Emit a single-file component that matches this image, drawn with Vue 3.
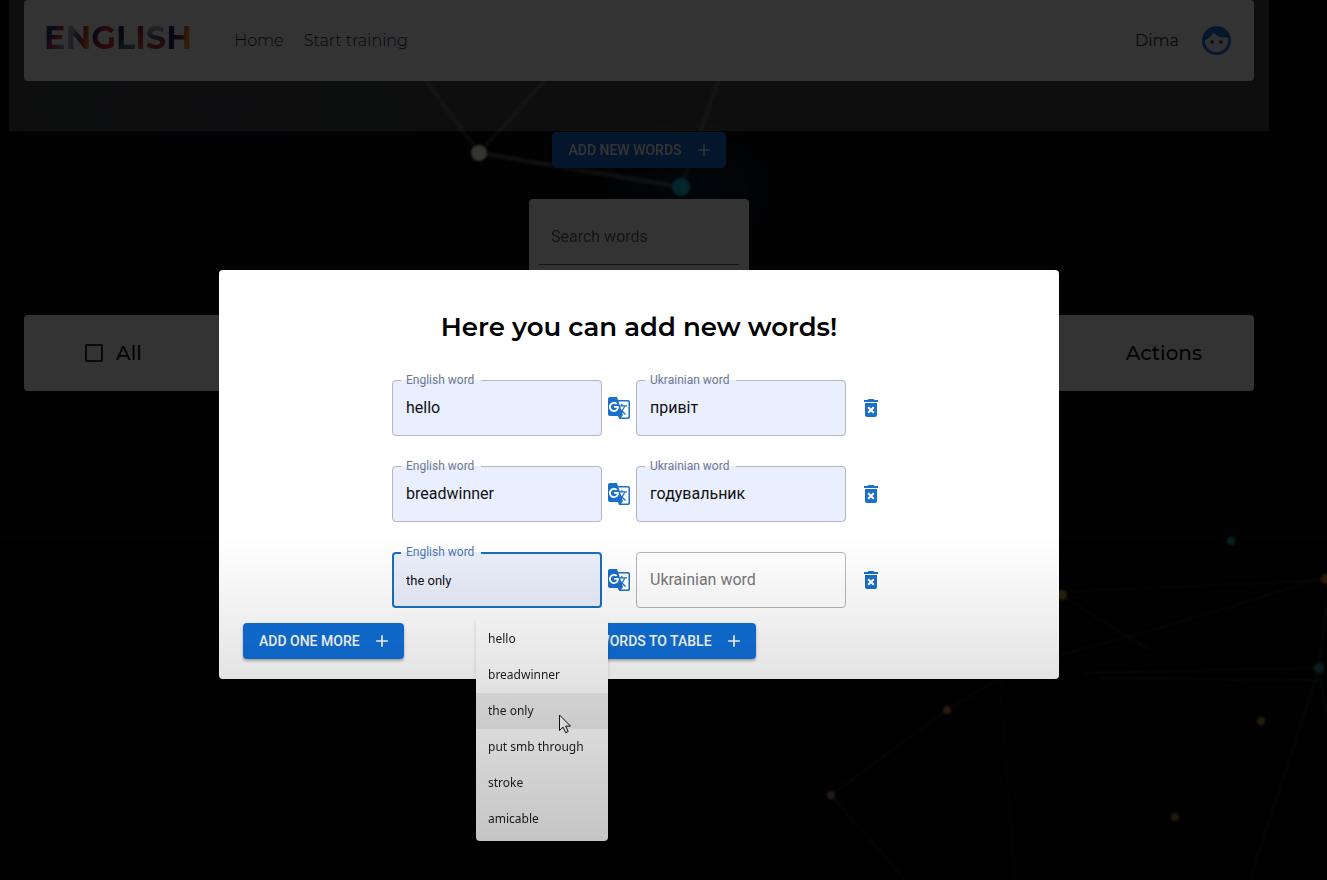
<script setup>
import { ref } from 'vue'

const PLUS = 'M19 13h-6v6h-2v-6H5v-2h6V5h2v6h6v2z'
const TRASH =
  'M6 19c0 1.1.9 2 2 2h8c1.1 0 2-.9 2-2V7H6v12zm2.46-7.12l1.41-1.41L12 12.59l2.12-2.12 1.41 1.41L13.41 14l2.12 2.12-1.41 1.41L12 15.41l-2.12 2.12-1.41-1.41L10.59 14l-2.13-2.12zM15.5 4l-1-1h-5l-1 1H5v2h14V4z'
const TRANSLATE =
  'M21 4H11l-1-3H3c-1.1 0-2 .9-2 2v15c0 1.1.9 2 2 2h8l1 3h9c1.1 0 2-.9 2-2V6c0-1.1-.9-2-2-2zM7 16c-2.76 0-5-2.24-5-5s2.24-5 5-5c1.35 0 2.48.5 3.35 1.3L9.03 8.57c-.38-.36-1.04-.78-2.03-.78-1.74 0-3.15 1.44-3.15 3.21S5.26 14.21 7 14.21c2.01 0 2.84-1.44 2.92-2.41H7v-1.71h4.68c.07.31.12.61.12 1.02C11.8 13.97 9.89 16 7 16zm6.17-5.42h3.7c-.43 1.25-1.11 2.43-2.05 3.47-.31-.35-.6-.72-.86-1.1l-.79-2.37zm8.33 9.92c0 .55-.45 1-1 1H14l2-2.5-1.04-3.1 3.1 3.1.92-.92-3.3-3.25.02-.02c1.13-1.25 1.93-2.69 2.4-4.22H20v-1.3h-4.53V8h-1.29v1.29h-1.44L11.46 5.5h9.04c.55 0 1 .45 1 1v14z'

const rows = ref([
  { id: 1, english: 'hello', ukrainian: 'привіт' },
  { id: 2, english: 'breadwinner', ukrainian: 'годувальник' },
  { id: 3, english: 'the only', ukrainian: '', active: true },
])
const suggestions = ['hello', 'breadwinner', 'the only', 'put smb through', 'stroke', 'amicable']
const hovered = 'the only'
</script>

<template>
  <div class="app">
    <svg class="network" viewBox="0 0 1327 880" preserveAspectRatio="xMidYMid slice" aria-hidden="true">
      <defs>
        <filter id="soft"><feGaussianBlur stdDeviation="1" /></filter>
        <radialGradient id="haze">
          <stop offset="0" stop-color="#10305a" stop-opacity=".6" />
          <stop offset="1" stop-color="#10305a" stop-opacity="0" />
        </radialGradient>
      </defs>
      <ellipse cx="690" cy="190" rx="100" ry="70" fill="url(#haze)" />
      <ellipse cx="220" cy="110" rx="200" ry="70" fill="url(#haze)" opacity=".3" />
      <g filter="url(#soft)" fill="none">
        <g stroke="#8d8d88" stroke-width="4" opacity=".3">
          <path d="M479 153L418 70M479 153L550 75M681 187L722 70" />
          <path d="M479 153L681 187" stroke-width="5" stroke="#d0d0c4" />
        </g>
        <g stroke="#9a8878" stroke-width="2" opacity=".25">
          <path d="M831 795L947 710L1000 678M831 795L905 880" />
          <path d="M1060 655L1170 625L1327 577M1060 592L1327 580M1062 596L1150 650" />
          <path d="M1000 680L1015 880M1000 680L1150 790" opacity=".5" />
        </g>
        <g stroke="#5c9a9c" stroke-width="2" opacity=".28">
          <path d="M1085 673L1319 668M1100 678L1319 680M1319 668L1327 600M1319 668L1250 880M1319 668L1327 720" />
        </g>
      </g>
      <g filter="url(#soft)">
        <circle cx="479" cy="153" r="8" fill="#fffff0" />
        <circle cx="681" cy="187" r="9" fill="#18b8d8" />
        <circle cx="1231" cy="541" r="4" fill="#30a8a0" />
        <circle cx="1319" cy="668" r="5" fill="#30a8a8" />
        <circle cx="1062" cy="595" r="5" fill="#c0b040" />
        <circle cx="1326" cy="579" r="5" fill="#d08020" />
        <circle cx="947" cy="710" r="4" fill="#f09860" />
        <circle cx="831" cy="795" r="4" fill="#e0a890" />
        <circle cx="1261" cy="721" r="4" fill="#c8a838" />
        <circle cx="1175" cy="817" r="4" fill="#c8a838" />
      </g>
    </svg>

    <div class="page">
      <header class="header">
        <nav class="bar">
          <a class="logo" href="#" aria-label="ENGLISH"><span>E</span><span>N</span><span>G</span><span>L</span><span>I</span><span>S</span><span>H</span></a>
          <a class="link" href="#">Home</a>
          <a class="link" href="#">Start training</a>
          <span class="user">Dima</span>
          <button class="avatar" type="button" aria-label="Profile">
            <svg viewBox="0 0 24 24" aria-hidden="true">
              <circle cx="12" cy="12" r="9" fill="#1976d2" fill-opacity=".12" />
              <path d="M12 2C6.48 2 2 6.480 2 12s4.480 10 10 10 10-4.480 10-10S17.520 2 12 2zM20 12c0 4.420-3.580 8-8 8s-8-3.580-8-8v-.14c2.600-.98 4.690-2.990 5.740-5.550C11.580 8.560 14.370 10 17.500 10c.75 0 1.470-.09 2.170-.24.21.71.33 1.460.33 2.240z" />
              <circle cx="9" cy="13" r="1.250" fill="#444" />
              <circle cx="15" cy="13" r="1.250" fill="#444" />
            </svg>
          </button>
        </nav>
      </header>

      <main class="main">
        <button class="btn" type="button">
          Add new words
          <svg viewBox="0 0 24 24" aria-hidden="true"><path :d="PLUS" /></svg>
        </button>
        <div class="search">
          <input type="text" placeholder="Search words" aria-label="Search words" />
        </div>
        <table class="words">
          <thead>
            <tr>
              <th class="all"><label><input type="checkbox" />All</label></th>
              <th class="actions">Actions</th>
            </tr>
          </thead>
        </table>
      </main>
    </div>

    <div class="backdrop">
      <section class="dialog" role="dialog" aria-labelledby="dialog-title">
        <h1 id="dialog-title">Here you can add new words!</h1>
        <div class="rows">
          <div v-for="row in rows" :key="row.id" class="row">
            <div class="field filled" :class="{ active: row.active }">
              <input :id="`en-${row.id}`" v-model="row.english" type="text" autocomplete="off" />
              <label :for="`en-${row.id}`">English word</label>
              <fieldset aria-hidden="true"><legend>English word</legend></fieldset>
              <ul v-if="row.active" class="menu">
                <li v-for="word in suggestions" :key="word" :class="{ hovered: word === hovered }">{{ word }}</li>
              </ul>
              <svg v-if="row.active" class="cursor" viewBox="0 0 12 20" aria-hidden="true">
                <path d="M.5 1v15.500l3.600-3.400 2.500 5.600 2.600-1.100-2.500-5.500h4.800z" fill="#fff" stroke="#111" />
              </svg>
            </div>
            <button class="translate" type="button" aria-label="Translate">
              <svg viewBox="0 0 24 24" aria-hidden="true"><path :d="TRANSLATE" /></svg>
            </button>
            <div class="field" :class="{ filled: row.ukrainian }">
              <input
                :id="`uk-${row.id}`"
                v-model="row.ukrainian"
                type="text"
                aria-label="Ukrainian word"
                :placeholder="row.ukrainian ? '' : 'Ukrainian word'"
              />
              <label v-if="row.ukrainian" :for="`uk-${row.id}`">Ukrainian word</label>
              <fieldset aria-hidden="true"><legend v-if="row.ukrainian">Ukrainian word</legend></fieldset>
            </div>
            <button class="delete" type="button" aria-label="Delete">
              <svg viewBox="0 0 24 24" aria-hidden="true"><path :d="TRASH" /></svg>
            </button>
          </div>
        </div>
        <div class="footer">
          <button class="btn" type="button">
            Add one more
            <svg viewBox="0 0 24 24" aria-hidden="true"><path :d="PLUS" /></svg>
          </button>
          <button class="btn" type="button">
            Add all words to table
            <svg viewBox="0 0 24 24" aria-hidden="true"><path :d="PLUS" /></svg>
          </button>
        </div>
      </section>
    </div>
    <div class="shade"></div>
  </div>
</template>

<style>
body {
  background: #0a0a0d;
}
</style>

<style scoped>
.app,
.app * {
  box-sizing: border-box;
}
.app {
  position: relative;
  min-height: 100vh;
  overflow: hidden;
  font-family: Roboto, "Liberation Sans", sans-serif;
  font-size: 16px;
  background: #0a0a0d;
}
button {
  border: 0;
  padding: 0;
  background: none;
  font-family: inherit;
  cursor: pointer;
}
svg {
  display: block;
}
.network {
  position: absolute;
  inset: 0;
  width: 100%;
  height: 100%;
}
.page {
  position: relative;
  padding: 0 58px 0 9px;
}
.header {
  padding: 0 15px 50px;
  background: rgba(255, 255, 255, 0.26);
}
.bar {
  display: flex;
  align-items: center;
  height: 81px;
  padding: 0 20px;
  border-radius: 4px;
  background: #fff;
  font-family: Montserrat, Inter, sans-serif;
}
.logo {
  display: flex;
  margin: 0 42px 6px 0;
  font-size: 32px;
  line-height: 40px;
  font-weight: 700;
  text-decoration: none;
}
.logo span {
  color: transparent;
  background: linear-gradient(160deg, #d02850 20%, #1c2c78 60%);
  background-clip: text;
}
.logo span:nth-child(1) {
  background-image: linear-gradient(120deg, #1c3c88 35%, #c02850 50%, #8890b0 75%);
}
.logo span:nth-child(2) {
  background-image: linear-gradient(100deg, #a0a8b0 30%, #506070 50%, #c02840 65%, #f0902c 85%);
}
.logo span:nth-child(3) {
  background-image: linear-gradient(100deg, #282c68 20%, #c82840 45%, #d04048 90%);
}
.logo span:nth-child(4) {
  background-image: linear-gradient(150deg, #18305c 45%, #6888a0 80%);
}
.logo span:nth-child(5) {
  background-image: linear-gradient(180deg, #902040 20%, #d05848 80%);
}
.logo span:nth-child(6) {
  background-image: linear-gradient(170deg, #a8a8b0 30%, #585078 50%, #c83848 65%);
}
.logo span:nth-child(7) {
  background-image: linear-gradient(100deg, #1c2c68 30%, #882848 55%, #f0982c 75%);
}
.link {
  margin-right: 20px;
  color: #201838;
  font-weight: 300;
  text-decoration: none;
}
.user {
  margin-left: auto;
  color: #333;
}
.avatar {
  margin-left: 20px;
}
.avatar svg {
  width: 35px;
  height: 35px;
  fill: #1976d2;
}
.main {
  display: flex;
  flex-direction: column;
  align-items: center;
  padding: 1px 15px 0;
}
.btn {
  display: flex;
  align-items: center;
  gap: 12px;
  height: 36px;
  padding: 0 12px 0 16px;
  border-radius: 4px;
  background: #1170d8;
  box-shadow: 0 2px 3px rgba(0, 0, 0, 0.3);
  color: #fff;
  font-size: 14px;
  font-weight: 500;
  text-transform: uppercase;
  white-space: nowrap;
}
.btn svg {
  width: 20px;
  height: 20px;
  fill: currentColor;
}
.search {
  width: 220px;
  height: 86px;
  margin: 31px 0 30px;
  padding: 10px;
  border-radius: 4px;
  background: #fff;
}
.search input {
  width: 100%;
  height: 56px;
  padding: 0 12px;
  border: 0;
  border-bottom: 1px solid #666;
  background: none;
  font: inherit;
}
.search input::placeholder {
  color: #666;
  opacity: 1;
}
.words {
  width: 100%;
  border-spacing: 0;
  border-radius: 4px;
  background: #fff;
  color: #111;
  font-family: Montserrat, Inter, sans-serif;
  font-size: 20px;
}
.words th {
  height: 76px;
  padding: 0 52px;
  font-weight: 500;
  text-align: left;
}
.words .actions {
  text-align: right;
}
.words label {
  display: flex;
  align-items: center;
  gap: 13px;
}
.words input {
  appearance: none;
  width: 18px;
  height: 18px;
  margin: 0 0 0 9px;
  border: 2px solid #333;
  border-radius: 2px;
}
.backdrop {
  position: absolute;
  inset: 0;
  padding: 270px 49px 0 0;
  background: rgba(0, 0, 0, 0.8);
}
.dialog {
  width: 840px;
  margin: 0 auto;
  padding: 40px 24px 20px;
  border-radius: 4px;
  background: #fff;
}
h1 {
  margin: 0 0 36px;
  color: #000;
  font-family: Montserrat, Inter, sans-serif;
  font-size: 26px;
  line-height: 34px;
  font-weight: 600;
  text-align: center;
}
.rows {
  display: flex;
  flex-direction: column;
  align-items: center;
  gap: 30px;
}
.row {
  display: flex;
  align-items: center;
  gap: 5px;
  padding-left: 5px;
}
.field {
  position: relative;
  width: 210px;
  height: 56px;
}
.field input {
  width: 100%;
  height: 100%;
  padding: 0 14px 2px;
  border: 0;
  border-radius: 4px;
  outline: 0;
  background: none;
  color: #111;
  font: inherit;
}
.field input::placeholder {
  color: #777;
  opacity: 1;
}
.field.filled input {
  background: #e9effe;
}
.field label {
  position: absolute;
  top: -8px;
  left: 14px;
  color: #6e7890;
  font-size: 12px;
  line-height: 16px;
}
.field fieldset {
  position: absolute;
  inset: -5px 0 0;
  margin: 0;
  padding: 0 8px;
  border: 1px solid #b4b6c0;
  border-radius: 4px;
  pointer-events: none;
}
.field legend {
  height: 11px;
  padding: 0 6px;
  font-size: 12px;
  line-height: 11px;
  visibility: hidden;
}
.field:not(.filled) fieldset {
  top: 0;
}
.field.filled.active input {
  padding-bottom: 0;
  background: #ebeffc;
  font-size: 13px;
}
.field.active label {
  color: #4a78b8;
}
.field.active fieldset {
  padding: 0 7px;
  border: 2px solid #1a6fc0;
}
.translate svg,
.delete svg {
  width: 24px;
  height: 24px;
  fill: #1a6fc8;
}
.delete {
  padding: 8px;
}
.menu {
  position: absolute;
  z-index: 2;
  top: 65px;
  left: 84px;
  width: 132px;
  margin: 0;
  padding: 4px 0;
  border-radius: 4px;
  background: #fff;
  box-shadow: 0 4px 4px rgba(0, 0, 0, 0.15);
  list-style: none;
  color: #222;
  font-family: "Segoe UI", "Noto Sans", sans-serif;
  font-size: 12px;
  line-height: 36px;
}
.menu li {
  padding: 0 12px;
  white-space: nowrap;
}
.menu .hovered {
  background: #ededed;
}
.cursor {
  position: absolute;
  z-index: 3;
  top: 162px;
  left: 167px;
  width: 12px;
  height: 20px;
}
.footer {
  display: grid;
  grid-template-columns: 1fr auto 1fr;
  margin-top: 15px;
}
.footer .btn {
  justify-self: start;
}
.shade {
  position: absolute;
  z-index: 5;
  inset: 0;
  background: linear-gradient(rgba(0, 0, 0, 0) 61%, rgba(0, 0, 0, 0.26));
  pointer-events: none;
}
</style>
